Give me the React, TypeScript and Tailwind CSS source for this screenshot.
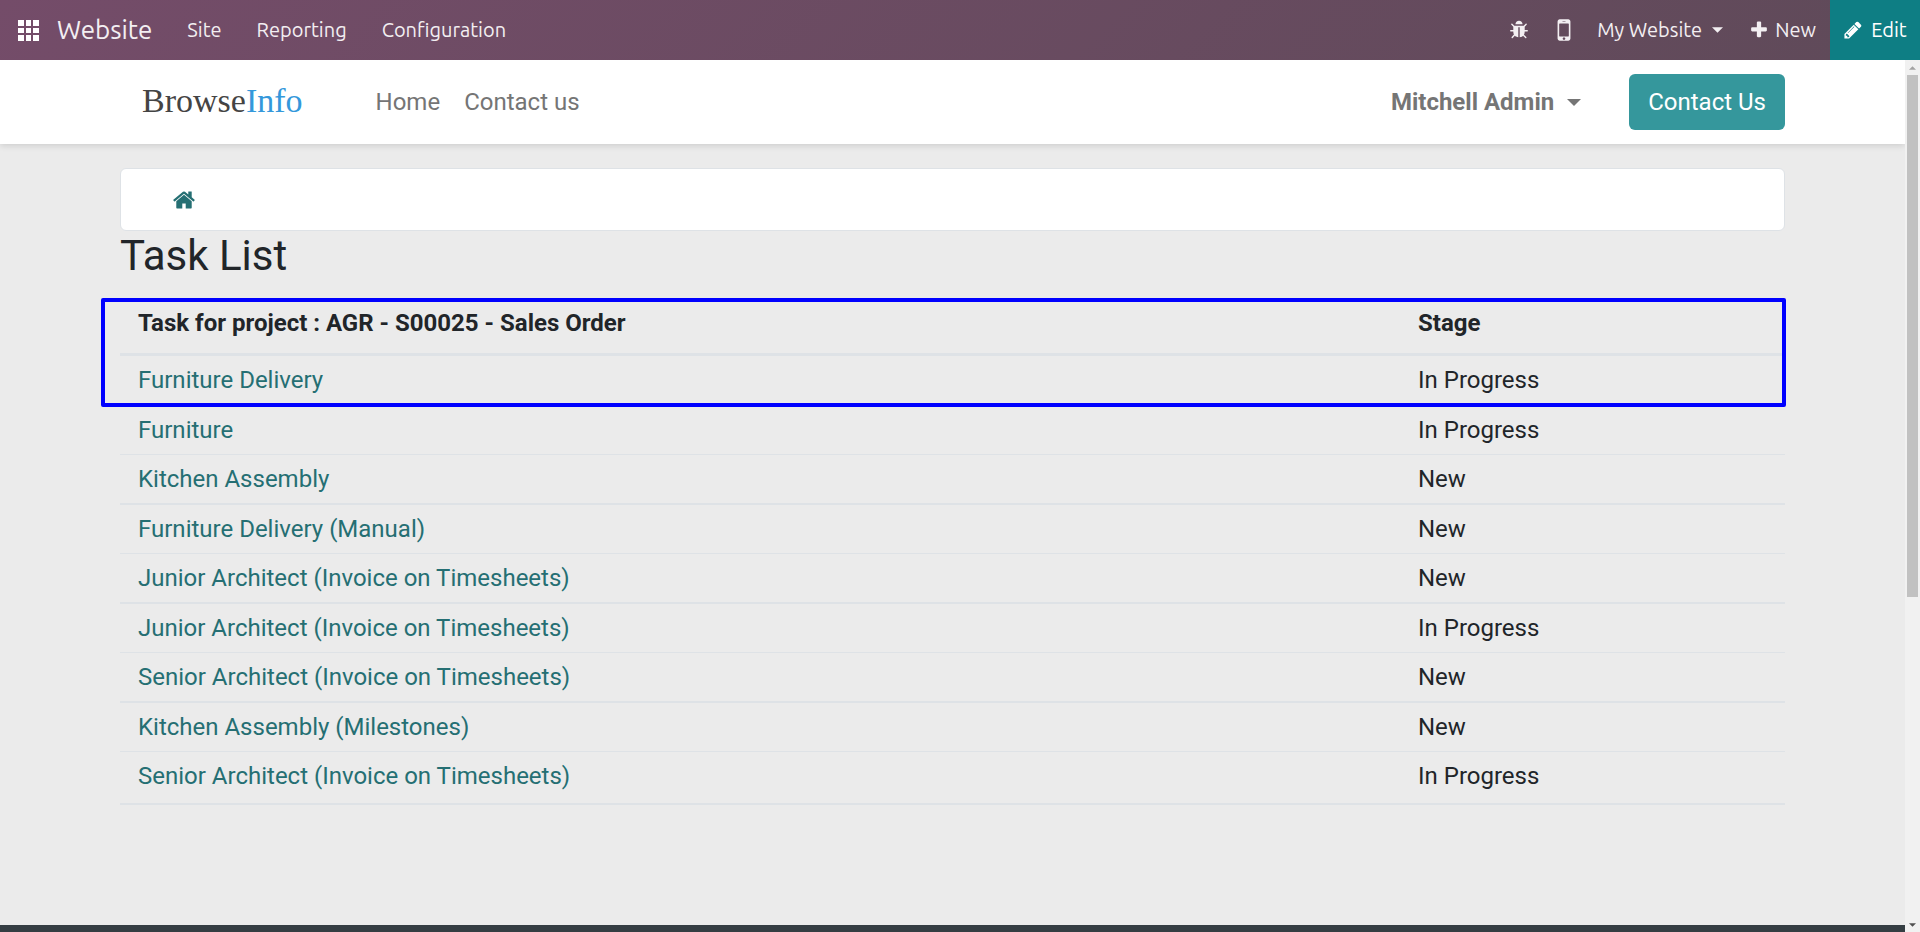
import React from "react";

const ICONS = {
  home: "M1472 992v480q0 26-19 45t-45 19h-384v-384h-256v384h-384q-26 0-45-19t-19-45v-480q0-1 .5-3t.5-3l575-474 575 474q1 2 1 6zm223-69l-62 74q-8 9-21 11h-3q-13 0-21-7l-692-577-692 577q-12 8-24 7-13-2-21-11l-62-74q-8-10-7-23.5t11-21.5l719-599q32-26 76-26t76 26l244 204v-195q0-14 9-23t23-9h192q14 0 23 9t9 23v408l219 182q10 8 11 21.5t-7 23.5z",
  plus: "M1600 736v192q0 40-28 68t-68 28h-416v416q0 40-28 68t-68 28h-192q-40 0-68-28t-28-68v-416h-416q-40 0-68-28t-28-68v-192q0-40 28-68t68-28h416v-416q0-40 28-68t68-28h192q40 0 68 28t28 68v416h416q40 0 68 28t28 68z",
  pencil: "M491 1536l91-91-235-235-91 91v107h128v128h107zm523-928q0-22-22-22-10 0-17 7l-542 542q-7 7-7 17 0 22 22 22 10 0 17-7l542-542q7-7 7-17zm-54-192l416 416-832 832h-416v-416zm683 96q0 53-37 90l-166 166-416-416 166-165q36-38 90-38 53 0 91 38l235 234q37 39 37 91z",
  bug: "M1696 960q0 26-19 45t-45 19h-224q0 171-67 290l208 209q19 19 19 45t-19 45q-18 19-45 19t-45-19l-198-197q-5 5-15 13t-42 28.5-65 36.5-82 29-97 13v-896h-128v896q-51 0-101.5-13.5t-87-33-66-39-43.5-32.5l-15-14-183 207q-20 21-48 21-24 0-43-16-19-18-20.5-44.500t15.5-46.500l202-227q-58-114-58-274h-224q-26 0-45-19t-19-45 19-45 45-19h224v-294l-173-173q-19-19-19-45t19-45 45-19 45 19l173 173h844l173-173q19-19 45-19t45 19 19 45-19 45l-173 173v294h224q26 0 45 19t19 45zm-480-576h-640q0-133 93.5-226.500t226.500-93.500 226.500 93.500 93.500 226.500z",
  mobile: "M976 1408q0-33-23.5-56.500t-56.500-23.500-56.500 23.500-23.500 56.500 23.500 56.500 56.500 23.500 56.500-23.500 23.500-56.500zm208-160v-704q0-13-9.500-22.500t-22.500-9.500h-512q-13 0-22.500 9.500t-9.500 22.500v704q0 13 9.500 22.500t22.500 9.500h512q13 0 22.500-9.500t9.500-22.500zm-192-848q0-16-16-16h-160q-16 0-16 16t16 16h160q16 0 16-16zm288-16v1024q0 52-38 90t-90 38h-512q-52 0-90-38t-38-90v-1024q0-52 38-90t90-38h512q52 0 90 38t38 90z",
};

function Icon({ name, className }: { name: keyof typeof ICONS; className: string }) {
  return (
    <svg viewBox="0 0 1792 1792" fill="currentColor" className={`shrink-0 ${className}`} aria-hidden="true">
      <path d={ICONS[name]} />
    </svg>
  );
}

function Caret({ className }: { className: string }) {
  return (
    <svg viewBox="0 0 12 6" fill="currentColor" className={`shrink-0 ${className}`} aria-hidden="true">
      <path d="M0 0h12L6 6z" />
    </svg>
  );
}

const TASKS: [string, string][] = [
  ["Furniture Delivery", "In Progress"],
  ["Furniture", "In Progress"],
  ["Kitchen Assembly", "New"],
  ["Furniture Delivery (Manual)", "New"],
  ["Junior Architect (Invoice on Timesheets)", "New"],
  ["Junior Architect (Invoice on Timesheets)", "In Progress"],
  ["Senior Architect (Invoice on Timesheets)", "New"],
  ["Kitchen Assembly (Milestones)", "New"],
  ["Senior Architect (Invoice on Timesheets)", "In Progress"],
];

function TopBar() {
  return (
    <nav className="flex h-[60px] shrink-0 items-center justify-between bg-linear-135 from-[#744c69] to-[#5f4a59] font-['Ubuntu','Noto_Sans',sans-serif] text-xl text-[#f3eff2]">
      <div className="flex items-center pl-[18px]">
        <button aria-label="Apps" className="text-white">
          <svg viewBox="0 0 21 21" fill="currentColor" className="size-[21px]" aria-hidden="true">
            <path d="M0 0h6v6H0zM8 0h5v6H8zM15 0h6v6h-6zM0 8h6v5H0zM8 8h5v5H8zM15 8h6v5h-6zM0 15h6v6H0zM8 15h5v6H8zM15 15h6v6h-6z" />
          </svg>
        </button>
        <a href="#website" className="ml-[18px] text-[26px] leading-8">Website</a>
        <div className="ml-[35px] flex gap-[35px]">
          <button>Site</button>
          <button>Reporting</button>
          <button>Configuration</button>
        </div>
      </div>
      <div className="flex items-center self-stretch">
        <button aria-label="Debug"><Icon name="bug" className="size-5" /></button>
        <button aria-label="Mobile preview" className="ml-5"><Icon name="mobile" className="size-[30px]" /></button>
        <button className="ml-[18px] flex items-center gap-[10px]">
          My Website <Caret className="h-[6px] w-[11px]" />
        </button>
        <button className="mr-[14px] ml-[26px] flex items-center gap-[6px]">
          <Icon name="plus" className="size-5" /> New
        </button>
        <button className="flex h-full w-[90px] items-center justify-center gap-2 bg-[#0e7e84] text-white">
          <Icon name="pencil" className="size-5" /> Edit
        </button>
      </div>
    </nav>
  );
}

function SiteHeader() {
  return (
    <header className="flex h-[84px] items-center justify-between bg-white pr-[120px] pl-[142px] text-[#757575] shadow-[0_2px_6px_rgba(0,0,0,0.12)]">
      <div className="flex items-center">
        <a href="#home" className="pb-[2px] font-['Liberation_Serif',serif] text-[34px] leading-9 text-[#444444]">
          Browse<span className="text-[#3498db]">Info</span>
        </a>
        <div className="ml-[73px] flex gap-6">
          <a href="#home">Home</a>
          <a href="#contact">Contact us</a>
        </div>
      </div>
      <div className="flex items-center gap-12">
        <button className="flex items-center gap-[13px] font-bold">
          Mitchell Admin <Caret className="h-[7px] w-[14px]" />
        </button>
        <a href="#contact" className="rounded-md bg-[#35979c] px-[19px] py-[10px] text-white">Contact Us</a>
      </div>
    </header>
  );
}

function ScrollBar() {
  return (
    <div className="flex w-[15px] shrink-0 flex-col items-center justify-between bg-[#f1f1f1] pt-[6px] pb-[5px]" aria-hidden="true">
      <Caret className="h-1 w-[7px] rotate-180 text-[#a3a3a3]" />
      <div className="mt-[5px] h-[522px] w-[11px] bg-[#c1c1c1]" />
      <div className="grow" />
      <Caret className="h-1 w-[7px] text-[#505050]" />
    </div>
  );
}

export default function App() {
  return (
    <div className="flex h-screen flex-col font-['Roboto',sans-serif] text-2xl leading-9 text-[#212529]">
      <TopBar />
      <div className="flex min-h-0 grow">
        <div className="min-w-0 grow overflow-hidden bg-[#ebebeb]">
          <SiteHeader />
          <main className="px-[120px] pt-6 pb-[120px]">
            <nav aria-label="Breadcrumb" className="flex h-[63px] items-center rounded-md border border-[#dee2e6] bg-white pl-[51px]">
              <a href="#account" aria-label="Home" className="text-[#256f73]"><Icon name="home" className="size-6" /></a>
            </nav>
            <h1 className="mb-3 text-[42px] leading-[50px]">Task List</h1>
            <div className="relative">
              <table className="w-full border-separate border-spacing-0 text-left">
                <thead>
                  <tr>
                    <th className="border-b-3 border-[#dee2e6] px-[18px] py-3 font-bold">Task for project : AGR - S00025 - Sales Order</th>
                    <th className="w-[385px] border-b-3 border-[#dee2e6] px-[18px] py-3 font-bold">Stage</th>
                  </tr>
                </thead>
                <tbody>
                  {TASKS.map(([name, stage], i) => (
                    <tr
                      key={i}
                      className="*:border-b *:border-[#dee2e6] *:px-[18px] *:py-[6px] odd:*:border-b-2 last:*:pb-[9px]"
                    >
                      <td><a href={`#task-${i + 1}`} className="text-[#256f73]">{name}</a></td>
                      <td>{stage}</td>
                    </tr>
                  ))}
                </tbody>
              </table>
              <div className="pointer-events-none absolute top-[5px] -right-px -left-[19px] h-[109px] rounded-xs border-4 border-[#0000ff]" />
            </div>
          </main>
          <footer className="h-10 bg-[#343d42]" />
        </div>
        <ScrollBar />
      </div>
    </div>
  );
}
